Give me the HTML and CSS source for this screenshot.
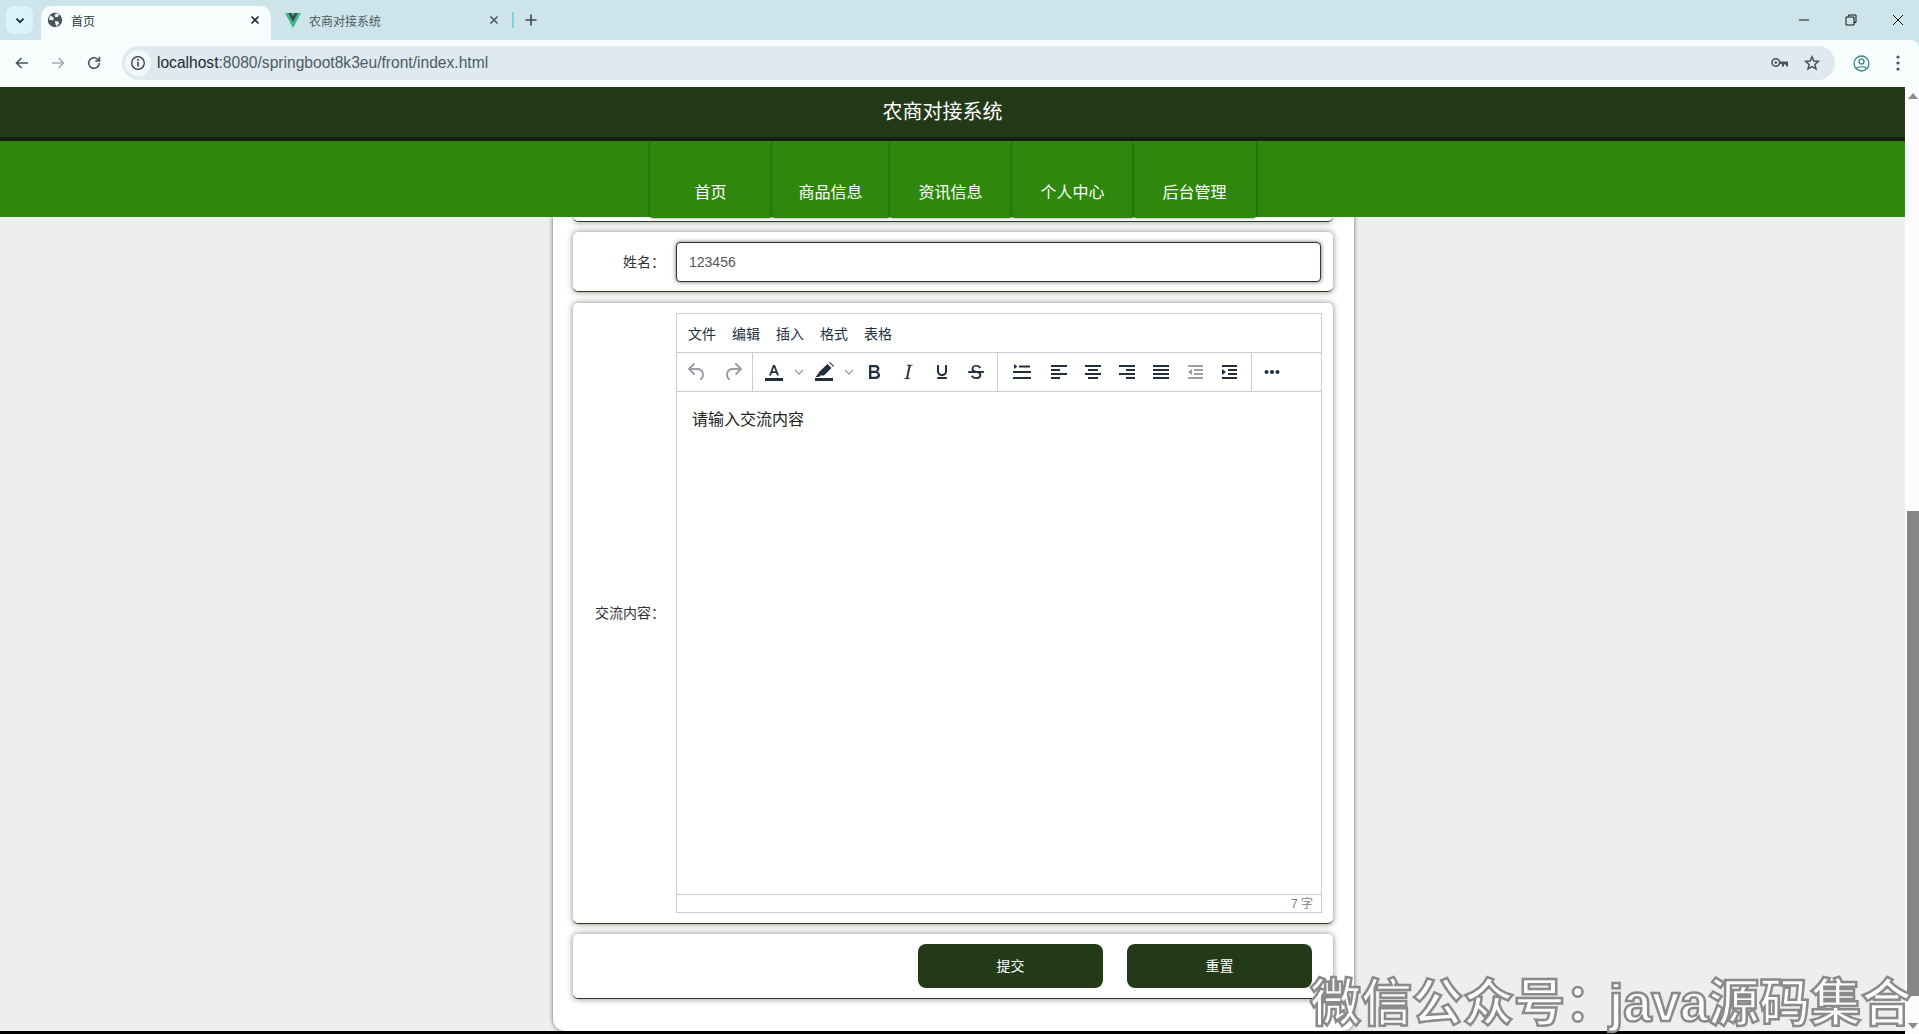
FILE: index.html
```html
<!DOCTYPE html>
<html lang="zh-CN">
  <head>
    <meta charset="UTF-8" />
    <title>首页</title>
    <link rel="stylesheet" href="styles.css">
  </head>
  <body>
    <div class="tabstrip">
      <div class="tab-list-btn">
        <svg width="12" height="12" viewBox="0 0 12 12"><path d="M2.500 4.700 6 8.200l3.500-3.500" fill="none" stroke="#1c2b33" stroke-width="1.800"/></svg>
      </div>
      <div class="tab tab-active">
        <svg class="favicon" width="16" height="16" viewBox="0 0 16 16"><circle cx="8" cy="8" r="7.200" fill="#48545a"/><path d="M3 3.500 6 5l1 2-2 1.500-3-1zM9 1.500l3 .8-1 2.500-2.500.5-1-2zM8 9l3.500.5.5 2-2.500 3-1-2z" fill="#f5fbfc"/></svg>
        <span class="tab-title">首页</span>
        <svg class="tab-close" width="10" height="10" viewBox="0 0 10 10"><path d="M1.500 1.500l7 7M8.500 1.500l-7 7" stroke="#1f2a30" stroke-width="1.600"/></svg>
      </div>
      <div class="tab tab-other">
        <svg class="favicon" width="16" height="15" viewBox="0 0 16 15"><path d="M0 0h16L8 15z" fill="#41b883"/><path d="M3.200 0h3L8 3.300 9.800 0h3L8 9z" fill="#35495e"/></svg>
        <span class="tab-title tab-title-dim">农商对接系统</span>
        <svg class="tab-close" width="10" height="10" viewBox="0 0 10 10"><path d="M1.500 1.500l7 7M8.500 1.500l-7 7" stroke="#48555b" stroke-width="1.500"/></svg>
      </div>
      <div class="tab-sep"></div>
      <svg class="new-tab" width="12" height="12" viewBox="0 0 12 12"><path d="M6 .5v11M.5 6h11" stroke="#38464d" stroke-width="1.600"/></svg>
      <div class="window-btns">
        <svg width="12" height="12" viewBox="0 0 12 12"><path d="M1 6h10" stroke="#111" stroke-width="1"/></svg>
        <svg width="12" height="12" viewBox="0 0 12 12"><path d="M3.500 2.500V1h7.500v7.500H9M1 3h8v8H1z" fill="none" stroke="#111" stroke-width="1"/></svg>
        <svg width="12" height="12" viewBox="0 0 12 12"><path d="M1 1l10 10M11 1 1 11" stroke="#111" stroke-width="1"/></svg>
      </div>
    </div>

    <div class="toolbar">
      <svg class="nav-icon" width="16" height="16" viewBox="0 0 16 16"><path d="M14 8H3M7.500 3 2.500 8l5 5" fill="none" stroke="#47555c" stroke-width="1.600"/></svg>
      <svg class="nav-icon" width="16" height="16" viewBox="0 0 16 16"><path d="M2 8h11M8.500 3l5 5-5 5" fill="none" stroke="#a3afb4" stroke-width="1.600"/></svg>
      <svg class="nav-icon" width="16" height="16" viewBox="0 0 16 16"><path d="M13.300 8a5.300 5.300 0 1 1-1.600-3.800L13.300 6M13.500 1.800V6H9.300" fill="none" stroke="#47555c" stroke-width="1.600"/></svg>
      <div class="omnibox">
        <div class="site-info">
          <svg width="16" height="16" viewBox="0 0 16 16"><circle cx="8" cy="8" r="6.300" fill="none" stroke="#2b363b" stroke-width="1.300"/><path d="M8 7v4.500" stroke="#2b363b" stroke-width="1.500"/><circle cx="8" cy="5" r="1" fill="#2b363b"/></svg>
        </div>
        <span class="url"><span class="url-host">localhost</span>:8080/springboot8k3eu/front/index.html</span>
        <svg class="key-icon" width="18" height="12" viewBox="0 0 18 12"><circle cx="4.800" cy="5.500" r="3.800" fill="none" stroke="#47555c" stroke-width="1.600"/><circle cx="4.800" cy="5.500" r="1.300" fill="#47555c"/><path d="M8.500 4.500h8.500v5h-2V7.500h-2v2h-2V7H8.500z" fill="#47555c"/></svg>
        <svg class="star-icon" width="16" height="16" viewBox="0 0 16 16"><path d="M8 1.800 9.800 6l4.600.4-3.500 3 1.100 4.500L8 11.500l-4 2.400 1.100-4.500-3.500-3L6.200 6z" fill="none" stroke="#47555c" stroke-width="1.500"/></svg>
      </div>
      <svg class="profile-icon" width="17" height="17" viewBox="0 0 17 17"><circle cx="8.500" cy="8.500" r="7.500" fill="#eaf6f8" stroke="#3c8a96" stroke-width="1.300"/><circle cx="8.500" cy="6.500" r="2.500" fill="none" stroke="#3c6d78" stroke-width="1.200"/><path d="M3.500 13.500c1.500-2.300 8.500-2.300 10 0" fill="none" stroke="#3c6d78" stroke-width="1.200"/></svg>
      <svg class="menu-icon" width="4" height="16" viewBox="0 0 4 16"><circle cx="2" cy="2" r="1.600" fill="#47555c"/><circle cx="2" cy="8" r="1.600" fill="#47555c"/><circle cx="2" cy="14" r="1.600" fill="#47555c"/></svg>
    </div>

    <div class="viewport">
      <div class="page">
        <header class="site-title">农商对接系统</header>
        <nav class="site-nav">
          <a class="nav-item">首页</a>
          <a class="nav-item nav-item-narrow">商品信息</a>
          <a class="nav-item">资讯信息</a>
          <a class="nav-item">个人中心</a>
          <a class="nav-item">后台管理</a>
        </nav>
        <main class="page-body">
          <div class="board">
            <div class="row row-stub"></div>

            <div class="row row-name">
              <label class="row-label">姓名：</label>
              <div class="name-input">123456</div>
            </div>

            <div class="row row-editor">
              <label class="row-label">交流内容：</label>
              <div class="editor">
                <div class="editor-menu">
                  <span class="menu-item">文件</span>
                  <span class="menu-item">编辑</span>
                  <span class="menu-item">插入</span>
                  <span class="menu-item">格式</span>
                  <span class="menu-item">表格</span>
                </div>
                <div class="editor-tools">
                  <div class="tool-group group-history">
                    <span class="tool tool-wide"><svg width="24" height="24" viewBox="0 0 24 24"><path fill="#9a9fa5" d="M6.400 8H12c3.700 0 6.200 2 6.800 5.100.6 2.700-.4 5.600-2.300 6.800a1 1 0 0 1-1-1.800c1.100-.6 1.800-2.700 1.400-4.600-.5-2.100-2.100-3.500-4.900-3.500H6.400l3.300 3.300a1 1 0 1 1-1.400 1.400l-5-5a1 1 0 0 1 0-1.400l5-5a1 1 0 0 1 1.400 1.400L6.400 8z"/></svg></span>
                    <span class="tool tool-wide"><svg width="24" height="24" viewBox="0 0 24 24"><path fill="#9a9fa5" d="M17.600 10H12c-2.800 0-4.400 1.400-4.900 3.500-.4 2 .3 4 1.400 4.600a1 1 0 1 1-1 1.800c-2-1.200-2.900-4.100-2.300-6.800.6-3 3-5.100 6.800-5.100h5.600l-3.300-3.300a1 1 0 1 1 1.400-1.400l5 5a1 1 0 0 1 0 1.400l-5 5a1 1 0 0 1-1.400-1.400l3.300-3.300z"/></svg></span>
                  </div>
                  <div class="tool-group group-format">
                    <span class="tool"><svg width="24" height="24" viewBox="0 0 24 24"><path fill="#222f3e" d="M7 15.500 11 5h2l4 10.500h-2l-.9-2.600H9.900L9 15.500zm3.500-4.300h3L12 7.200z"/><rect x="3" y="18" width="18" height="3" fill="#222f3e"/></svg></span>
                    <span class="tool-arrow"><svg width="10" height="6" viewBox="0 0 10 6"><path d="M1 1l4 4 4-4" fill="none" stroke="#9a9fa5" stroke-width="1.300"/></svg></span>
                    <span class="tool"><svg width="24" height="24" viewBox="0 0 24 24"><path fill="#222f3e" d="M15.500 4 19.500 8l-7.500 7.500H8.500L7 17H3.500l3-3.500V12.500zM17 2.500l1-.5 4 4-.5 1z"/><rect x="3" y="18" width="18" height="3" fill="#222f3e"/></svg></span>
                    <span class="tool-arrow"><svg width="10" height="6" viewBox="0 0 10 6"><path d="M1 1l4 4 4-4" fill="none" stroke="#9a9fa5" stroke-width="1.300"/></svg></span>
                    <span class="tool"><svg width="24" height="24" viewBox="0 0 24 24"><path fill="#222f3e" d="M7.800 19c-.3 0-.5 0-.6-.2l-.2-.5V5.700c0-.2 0-.4.2-.5l.6-.2h5c1.500 0 2.700.3 3.500 1 .7.600 1.100 1.400 1.100 2.500a3 3 0 0 1-.6 1.900c-.4.600-1 1-1.600 1.200.4.100.9.300 1.300.6s.8.700 1 1.200c.4.400.5 1 .5 1.600 0 1.300-.4 2.300-1.300 3-.8.700-2.100 1-3.800 1H7.800zm5-8.300c.6 0 1.200-.1 1.600-.5.400-.3.600-.7.600-1.300 0-1.100-.8-1.700-2.300-1.700H9.300v3.500h3.400zm.5 6c.7 0 1.300-.1 1.700-.4.400-.4.600-.9.600-1.500s-.2-1-.7-1.400c-.4-.3-1-.4-2-.4H9.400v3.800h4z"/></svg></span>
                    <span class="tool"><svg width="24" height="24" viewBox="0 0 24 24"><path fill="#222f3e" d="M16.700 4.700l-.1.900h-.3c-.6 0-1 0-1.400.3-.3.300-.4.600-.5 1.100l-2.100 9.800v.6c0 .5.400.8 1.400.8h.2l-.2.800H8l.2-.8h.2c1.100 0 1.800-.5 2-1.500l2-9.800.1-.5c0-.6-.4-.8-1.400-.8h-.3l.2-.9h5.800z"/></svg></span>
                    <span class="tool"><svg width="24" height="24" viewBox="0 0 24 24"><path fill="#222f3e" d="M16 5c.6 0 1 .4 1 1v5.500a4 4 0 0 1-.4 1.800l-1 1.400a5.300 5.300 0 0 1-5.500 1 5 5 0 0 1-1.600-1c-.5-.4-.8-.9-1.100-1.400a4 4 0 0 1-.4-1.800V6c0-.6.4-1 1-1s1 .4 1 1v5.500c0 .3 0 .6.200 1l.6.7a3.300 3.300 0 0 0 2.200.8 3.400 3.400 0 0 0 2.200-.8c.3-.2.4-.5.600-.8l.2-.9V6c0-.6.4-1 1-1zM8 17h8c.6 0 1 .4 1 1s-.4 1-1 1H8a1 1 0 0 1 0-2z"/></svg></span>
                    <span class="tool"><svg width="24" height="24" viewBox="0 0 24 24"><path fill="#222f3e" d="M15.600 8.500c-.5-.7-1-1.100-1.300-1.300-.6-.4-1.300-.6-2-.6-2.700 0-2.800 1.700-2.800 2.100 0 1.600 1.800 2 3.200 2.300 4.400.9 4.600 2.800 4.600 3.900 0 1.400-.7 4.100-5 4.100A6.200 6.200 0 0 1 7 16.400l1.500-1.100c.4.600 1.600 2 3.700 2 1.600 0 2.500-.4 3-1.200.4-.8.300-2-.8-2.600-.7-.4-1.600-.7-2.900-1-1-.2-3.900-.8-3.900-3.600C7.600 6 10.300 5 12.400 5c2.900 0 4.200 1.600 4.700 2.400l-1.500 1.100z"/><path fill="#222f3e" d="M5 11h14a1 1 0 0 1 0 2H5a1 1 0 0 1 0-2z"/></svg></span>
                  </div>
                  <div class="tool-group group-align">
                    <span class="tool tool-lineheight"><svg width="24" height="24" viewBox="0 0 24 24"><path fill="#222f3e" d="M4 4l3.500 2.500L4 9zM9 5.500h11v2H9zM3 11h18v2H3zM3 17h18v2H3z"/></svg></span>
                    <span class="tool"><svg width="24" height="24" viewBox="0 0 24 24"><path fill="#222f3e" d="M4 5h16v2H4zM4 9h9v2H4zM4 13h16v2H4zM4 17h9v2H4z"/></svg></span>
                    <span class="tool"><svg width="24" height="24" viewBox="0 0 24 24"><path fill="#222f3e" d="M4 5h16v2H4zM7 9h10v2H7zM4 13h16v2H4zM7 17h10v2H7z"/></svg></span>
                    <span class="tool"><svg width="24" height="24" viewBox="0 0 24 24"><path fill="#222f3e" d="M4 5h16v2H4zM11 9h9v2h-9zM4 13h16v2H4zM11 17h9v2h-9z"/></svg></span>
                    <span class="tool"><svg width="24" height="24" viewBox="0 0 24 24"><path fill="#222f3e" d="M4 5h16v2H4zM4 9h16v2H4zM4 13h16v2H4zM4 17h16v2H4z"/></svg></span>
                    <span class="tool"><svg width="24" height="24" viewBox="0 0 24 24"><path fill="#9a9fa5" d="M5 5h15v2H5zM11 9h9v2h-9zM11 13h9v2h-9zM5 17h15v2H5zM9 9v6l-4-3z"/></svg></span>
                    <span class="tool"><svg width="24" height="24" viewBox="0 0 24 24"><path fill="#222f3e" d="M5 5h15v2H5zM11 9h9v2h-9zM11 13h9v2h-9zM5 17h15v2H5zM5 9v6l4-3z"/></svg></span>
                  </div>
                  <div class="tool-group group-more">
                    <span class="tool"><svg width="24" height="24" viewBox="0 0 24 24"><circle cx="6.500" cy="12" r="2" fill="#222f3e"/><circle cx="12" cy="12" r="2" fill="#222f3e"/><circle cx="17.500" cy="12" r="2" fill="#222f3e"/></svg></span>
                  </div>
                </div>
                <div class="editor-content">请输入交流内容</div>
                <div class="editor-status">7 字</div>
              </div>
            </div>

            <div class="row row-actions">
              <button class="action-btn">提交</button>
              <button class="action-btn">重置</button>
            </div>
          </div>
        </main>
        <div class="page-edge"></div>
      </div>

      <div class="scrollbar">
        <div class="scroll-arrow"><svg width="10" height="6" viewBox="0 0 10 6"><path d="M5 0l5 6H0z" fill="#8d8d8d"/></svg></div>
        <div class="scroll-gap"></div>
        <div class="scroll-thumb"></div>
        <div class="scroll-rest"></div>
        <div class="scroll-arrow"><svg width="10" height="6" viewBox="0 0 10 6"><path d="M5 6l5-6H0z" fill="#8d8d8d"/></svg></div>
      </div>

      <div class="watermark">微信公众号<span class="watermark-colon">：</span>java源码集合</div>
    </div>
  </body>
</html>
```

FILE: styles.css
```css
* {
  box-sizing: border-box;
}

html,
body {
  margin: 0;
  height: 100%;
  overflow: hidden;
}

body {
  display: flex;
  flex-direction: column;
  font-family: "Liberation Sans", "Noto Sans CJK SC", sans-serif;
  background: #cde5ea;
}

/* browser frame */
.tabstrip {
  height: 40px;
  display: flex;
  align-items: flex-end;
  padding-left: 6px;
  background: #cde5ea;
  flex-shrink: 0;
}

.tab-list-btn {
  width: 27px;
  height: 28px;
  margin-bottom: 6px;
  margin-right: 8px;
  display: flex;
  align-items: center;
  justify-content: center;
  background: #d9f3f9;
  border-radius: 8px;
}

.tab {
  width: 230px;
  height: 34px;
  padding: 0 11px 6px 6px;
  display: flex;
  align-items: center;
  font-size: 12px;
  color: #2b3a42;
}

.tab-active {
  background: #f7fcfd;
  border-radius: 10px 10px 0 0;
}

.tab-other {
  width: 240px;
  padding-left: 14px;
  padding-right: 12px;
}

.favicon {
  margin-right: 8px;
  flex-shrink: 0;
}

.tab-title {
  flex: 1;
}

.tab-title-dim {
  color: #4a5a61;
}

.tab-sep {
  width: 2px;
  height: 16px;
  margin: 0 0 12px 1px;
  background: #86cfde;
}

.new-tab {
  margin: 0 0 14px 11px;
}

.window-btns {
  margin-left: auto;
  width: 138px;
  height: 40px;
  padding: 0 15px 0 17px;
  display: flex;
  align-items: center;
  justify-content: space-between;
}

.toolbar {
  height: 47px;
  padding: 0 19px 1px 14px;
  display: flex;
  align-items: center;
  flex-shrink: 0;
  background: #f7fcfd;
  border-radius: 0 8px 0 0;
}

.nav-icon {
  margin-right: 20px;
}

.omnibox {
  width: 1714px;
  height: 34px;
  padding: 0 15px 0 3px;
  display: flex;
  align-items: center;
  background: #deeaef;
  border-radius: 17px;
}

.site-info {
  width: 26px;
  height: 26px;
  margin-right: 6px;
  display: flex;
  align-items: center;
  justify-content: center;
  background: #f2f8fa;
  border-radius: 50%;
}

.url {
  flex: 1;
  font-size: 15.600px;
  color: #4d5b62;
}

.url-host {
  color: #1d282d;
}

.key-icon {
  margin-right: 15px;
}

.profile-icon {
  margin-left: 18px;
}

.menu-icon {
  margin-left: 26px;
}

/* page */
.viewport {
  flex: 1;
  min-height: 0;
  display: flex;
  position: relative;
}

.page {
  flex: 1;
  min-width: 0;
  display: flex;
  flex-direction: column;
  background: #eeeeee;
}

.site-title {
  height: 54px;
  padding: 0 20px 4px 0;
  display: flex;
  align-items: center;
  justify-content: center;
  font-size: 20px;
  color: #fff;
  background: #233a18;
  border-bottom: 4px solid #1a1f16;
  flex-shrink: 0;
}

.site-nav {
  height: 76px;
  display: flex;
  justify-content: center;
  position: relative;
  z-index: 2;
  background: #2f880d;
  flex-shrink: 0;
}

.nav-item {
  width: 122px;
  height: 77px;
  padding-top: 40px;
  text-align: center;
  font-size: 16px;
  line-height: 24px;
  color: #fff;
  background: #2f880d;
  border-radius: 0 0 3px 3px;
  box-shadow: 0 0 3px rgba(0, 0, 0, 0.55);
}

.nav-item-narrow {
  width: 118px;
}

.page-body {
  flex: 1;
  min-height: 0;
  overflow: hidden;
}

.board {
  width: 801px;
  height: 100%;
  margin: 0 551px 0 553px;
  padding: 0 21px 0 20px;
  display: flex;
  flex-direction: column;
  gap: 10px;
  background: #fff;
  border-radius: 0 0 12px 12px;
  box-shadow: 0 0 4px rgba(0, 0, 0, 0.6);
}

.page-edge {
  height: 3px;
  background: #000;
  position: relative;
  z-index: 1;
  flex-shrink: 0;
}

.row {
  display: flex;
  align-items: center;
  flex-shrink: 0;
  background: #fff;
  border-radius: 5px;
  border-bottom: 1px solid #2c3a28;
  box-shadow: 0 0 6px rgba(60, 70, 55, 0.65);
}

.row-stub {
  height: 5px;
  border-radius: 0 0 5px 5px;
}

.row-name {
  height: 60px;
  margin-bottom: 1px;
}

.row-editor {
  height: 621px;
}

.row-actions {
  height: 65px;
  padding-right: 21px;
  justify-content: flex-end;
  gap: 24px;
}

.row-label {
  width: 92px;
  margin-right: 11px;
  padding-bottom: 2px;
  text-align: right;
  font-size: 14px;
  color: #333;
  flex-shrink: 0;
}

.name-input {
  width: 645px;
  height: 40px;
  padding-left: 12px;
  line-height: 38px;
  font-size: 14px;
  color: #555;
  background: #fff;
  border: 1px solid #2c3a28;
  border-radius: 4px;
  box-shadow: 0 0 4px rgba(40, 50, 35, 0.7);
}

/* rich text editor */
.editor {
  width: 646px;
  height: 600px;
  display: flex;
  flex-direction: column;
  border: 1px solid #cccccc;
}

.editor-menu {
  height: 39px;
  padding-left: 3px;
  display: flex;
  align-items: center;
  border-bottom: 1px solid #cccccc;
  flex-shrink: 0;
}

.menu-item {
  width: 44px;
  text-align: center;
  font-size: 14px;
  color: #222f3e;
}

.editor-tools {
  height: 39px;
  display: flex;
  border-bottom: 1px solid #cccccc;
  flex-shrink: 0;
}

.tool-group {
  display: flex;
  align-items: center;
  border-right: 1px solid #cccccc;
}

.group-history {
  width: 76px;
  padding-left: 2px;
}

.group-format {
  width: 245px;
  padding-left: 4px;
}

.group-align {
  width: 254px;
  padding-left: 7px;
}

.group-more {
  padding-left: 3px;
  border-right: none;
}

.tool {
  width: 34px;
  height: 34px;
  display: flex;
  align-items: center;
  justify-content: center;
  flex-shrink: 0;
}

.tool-wide {
  width: 36px;
}

.tool-lineheight {
  margin-right: 3px;
}

.tool-arrow {
  width: 16px;
  display: flex;
  justify-content: center;
  flex-shrink: 0;
}

.editor-content {
  flex: 1;
  padding: 16px 15px;
  font-size: 16px;
  line-height: 24px;
  color: #222;
}

.editor-status {
  height: 18px;
  padding-right: 8px;
  text-align: right;
  font-size: 12px;
  line-height: 18px;
  color: #7d8287;
  border-top: 1px solid #cccccc;
  flex-shrink: 0;
}

.action-btn {
  width: 185px;
  height: 44px;
  padding-bottom: 3px;
  font-family: inherit;
  font-size: 14px;
  color: #fff;
  background: #233a18;
  border: none;
  border-radius: 8px;
}

/* scrollbar drawn by hand, the page itself does not scroll */
.scrollbar {
  width: 14px;
  display: flex;
  flex-direction: column;
  align-items: flex-end;
  background: #fcfcfc;
  flex-shrink: 0;
}

.scroll-arrow {
  width: 12px;
  height: 17px;
  display: flex;
  align-items: center;
  justify-content: center;
}

.scroll-gap {
  height: 407px;
}

.scroll-thumb {
  width: 12px;
  height: 485px;
  background: #868686;
}

.scroll-rest {
  flex: 1;
}

.watermark {
  position: absolute;
  left: 1310px;
  top: 887px;
  font-size: 51px;
  line-height: 60px;
  font-weight: 700;
  white-space: nowrap;
  color: rgba(255, 255, 255, 0.85);
  -webkit-text-stroke: 2.500px #8a8a8a;
  z-index: 3;
}

.watermark-colon {
  letter-spacing: -7px;
}
```
